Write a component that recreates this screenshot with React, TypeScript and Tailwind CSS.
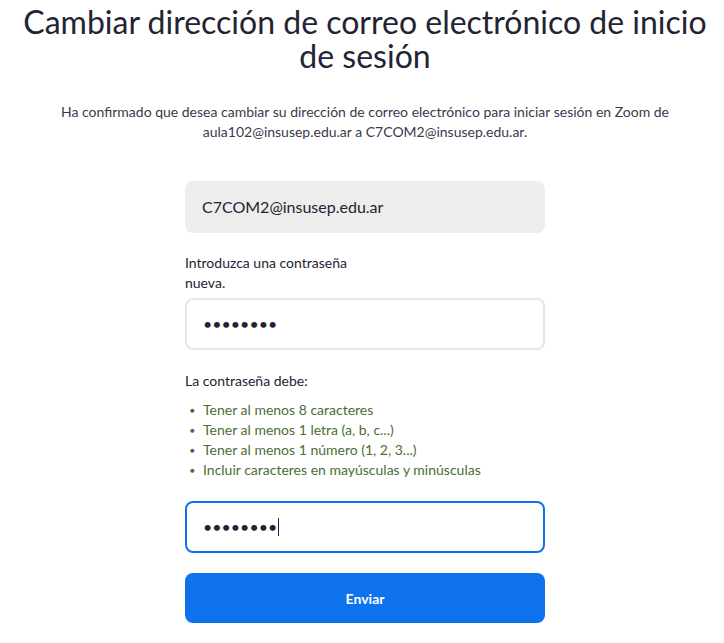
export default function App() {
  const rules = [
    "Tener al menos 8 caracteres",
    "Tener al menos 1 letra (a, b, c...)",
    "Tener al menos 1 número (1, 2, 3...)",
    "Incluir caracteres en mayúsculas y minúsculas",
  ];

  return (
    <div className="min-h-screen bg-white pl-[6px] font-['Lato',sans-serif] text-[#232333]">
      <h1 className="pt-[5px] text-center text-[32px] leading-[34px] font-normal px-4">
        Cambiar dirección de correo electrónico de inicio de sesión
      </h1>
      <p className="mt-[29px] mx-auto max-w-[640px] text-center text-[14px] leading-[20px] text-[#39394d]">
        Ha confirmado que desea cambiar su dirección de correo electrónico para iniciar sesión en Zoom de
        aula102@insusep.edu.ar a C7COM2@insusep.edu.ar.
      </p>

      <div className="mx-auto mt-[39px] w-[360px]">
        <div className="h-[52px] rounded-lg bg-[#ededed] px-[17px] flex items-center text-[16px]">
          C7COM2@insusep.edu.ar
        </div>

        <label className="block mt-[20px] w-[180px] text-[14px] leading-[20px]">
          Introduzca una contraseña nueva.
        </label>
        <div className="mt-[5px] h-[52px] rounded-lg border-2 border-[#e6e6e6] px-[16px] flex items-center text-[16px]">
          ••••••••
        </div>

        <div className="mt-[21px] text-[14px] leading-[20px]">La contraseña debe:</div>
        <ul className="mt-[9px] text-[14px] leading-[20px] text-[#4a6e35]">
          {rules.map((r) => (
            <li key={r} className="flex items-center">
              <span className="w-[18px] pl-[5px] text-[8px]">●</span>
              {r}
            </li>
          ))}
        </ul>

        <div className="mt-[21px] h-[52px] rounded-lg border-2 border-[#0e72ed] px-[16px] flex items-center text-[16px]">
          ••••••••
          <span className="ml-[1px] h-[18px] w-px bg-[#232333]" />
        </div>

        <button className="mt-[20px] h-[50px] w-full rounded-lg bg-[#0e72ed] text-white text-[14px] font-bold">
          Enviar
        </button>
      </div>
    </div>
  );
}
